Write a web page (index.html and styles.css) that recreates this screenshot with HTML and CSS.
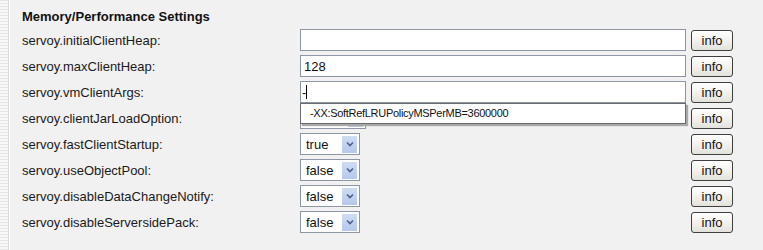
FILE: index.html
```html
<!DOCTYPE html>
<html>
<head>
<meta charset="utf-8">
<link rel="stylesheet" href="styles.css">
</head>
<body>
<div class="page">
  <div class="stripe"></div>
  <div class="main">
    <div class="heading">Memory/Performance Settings</div>
    <div class="rows">
      <div class="label">servoy.initialClientHeap:</div>
      <div class="field"><input class="text" type="text" value=""></div>
      <button class="info">info</button>

      <div class="label">servoy.maxClientHeap:</div>
      <div class="field"><input class="text" type="text" value="128"></div>
      <button class="info">info</button>

      <div class="label">servoy.vmClientArgs:</div>
      <div class="field anchor">
        <div class="text fake"><span>-</span><span class="caret"></span></div>
        <div class="popup">-XX:SoftRefLRUPolicyMSPerMB=3600000</div>
      </div>
      <button class="info">info</button>

      <div class="label">servoy.clientJarLoadOption:</div>
      <div class="field"><div class="select wide"><span class="val">large</span><span class="arrow"><svg width="8" height="6" viewBox="0 0 8 6"><path d="M1 1.5 L4 4.5 L7 1.5" fill="none" stroke="#4a5f8c" stroke-width="1.6"/></svg></span></div></div>
      <button class="info">info</button>

      <div class="label">servoy.fastClientStartup:</div>
      <div class="field"><div class="select"><span class="val">true</span><span class="arrow"><svg width="8" height="6" viewBox="0 0 8 6"><path d="M1 1.5 L4 4.5 L7 1.5" fill="none" stroke="#4a5f8c" stroke-width="1.6"/></svg></span></div></div>
      <button class="info">info</button>

      <div class="label">servoy.useObjectPool:</div>
      <div class="field"><div class="select"><span class="val">false</span><span class="arrow"><svg width="8" height="6" viewBox="0 0 8 6"><path d="M1 1.5 L4 4.5 L7 1.5" fill="none" stroke="#4a5f8c" stroke-width="1.6"/></svg></span></div></div>
      <button class="info">info</button>

      <div class="label">servoy.disableDataChangeNotify:</div>
      <div class="field"><div class="select"><span class="val">false</span><span class="arrow"><svg width="8" height="6" viewBox="0 0 8 6"><path d="M1 1.5 L4 4.5 L7 1.5" fill="none" stroke="#4a5f8c" stroke-width="1.6"/></svg></span></div></div>
      <button class="info">info</button>

      <div class="label">servoy.disableServersidePack:</div>
      <div class="field"><div class="select"><span class="val">false</span><span class="arrow"><svg width="8" height="6" viewBox="0 0 8 6"><path d="M1 1.5 L4 4.5 L7 1.5" fill="none" stroke="#4a5f8c" stroke-width="1.6"/></svg></span></div></div>
      <button class="info">info</button>
    </div>
  </div>
</div>
</body>
</html>
```
FILE: styles.css
```css
html, body {
  margin: 0;
  padding: 0;
  background: #f1f1f1;
  font-family: "Liberation Sans", Arial, sans-serif;
  font-size: 13px;
  color: #111;
}
.page {
  display: flex;
  height: 250px;
  overflow: hidden;
}
.stripe {
  width: 8px;
  flex: none;
  background: repeating-linear-gradient(to bottom, #e6e6e6 0, #e6e6e6 1px, #f8f8f8 1px, #f8f8f8 3px);
  border-right: 1px solid #d8d8d8;
  box-shadow: 1px 0 0 #ffffff;
}
.main {
  flex: 1;
  padding: 7px 0 0 13px;
}
.heading {
  font-weight: bold;
  height: 20px;
  line-height: 20px;
  font-size: 13px;
  color: #111;
}
.rows {
  display: grid;
  grid-template-columns: 273px 386px 42px;
  column-gap: 5px;
  grid-auto-rows: 26px;
  align-items: center;
}
.label {
  white-space: nowrap;
  color: #1a1a1a;
}
.field {
  display: flex;
  align-items: center;
}
.anchor {
  position: relative;
}
.text {
  box-sizing: border-box;
  width: 386px;
  height: 22px;
  margin: 0;
  border: 1px solid #8d96a2;
  background: #fff;
  font-family: "Liberation Sans", Arial, sans-serif;
  font-size: 13px;
  color: #111;
  padding: 0 3px;
  outline: none;
}
.fake {
  display: flex;
  align-items: center;
  padding-left: 1px;
}
.caret {
  display: inline-block;
  width: 1px;
  height: 14px;
  background: #000;
}
.popup {
  position: absolute;
  left: 0;
  top: 22px;
  box-sizing: border-box;
  width: 386px;
  height: 21px;
  border: 1px solid #6b6b6b;
  background: #fff;
  font-size: 11px;
  letter-spacing: -0.3px;
  line-height: 19px;
  padding-left: 9px;
  color: #111;
  box-shadow: 2px 2px 1px #a9a9a9;
  z-index: 2;
}
.select {
  box-sizing: border-box;
  width: 60px;
  height: 22px;
  border: 1px solid #8d96a2;
  background: #fff;
  display: flex;
  align-items: center;
  justify-content: space-between;
  padding: 0 2px 0 5px;
}
.select.wide {
  width: 66px;
}
.arrow {
  width: 15px;
  height: 17px;
  background: linear-gradient(#cfdcf3, #b5c8eb);
  display: flex;
  align-items: center;
  justify-content: center;
}
.info {
  box-sizing: border-box;
  width: 42px;
  height: 21px;
  margin: 0;
  padding: 0;
  border: 1px solid #3f3f3f;
  border-radius: 3px;
  background: linear-gradient(#ffffff, #f0efea 60%, #e2e1da);
  font-family: "Liberation Sans", Arial, sans-serif;
  font-size: 13px;
  color: #111;
  line-height: 19px;
}
```
